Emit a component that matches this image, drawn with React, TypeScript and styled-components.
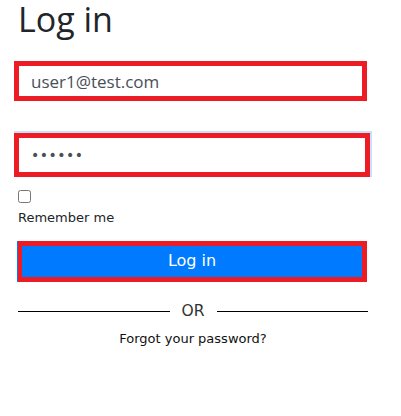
import styled, { createGlobalStyle } from "styled-components";

const GlobalStyle = createGlobalStyle`
  html, body {
    margin: 0;
    padding: 0;
    background: #ffffff;
  }
  body {
    font-family: "DejaVu Sans", Verdana, sans-serif;
    color: #212529;
  }
`;

const Page = styled.div`
  width: 350px;
  padding: 0 0 0 18px;
  display: flex;
  flex-direction: column;
`;

const Title = styled.h1`
  margin: 0;
  padding-top: 1px;
  font-family: "Open Sans", "Segoe UI", sans-serif;
  font-size: 34px;
  font-weight: 400;
  line-height: 36px;
  color: #212529;
`;

const Input = styled.input<{ $top: number; $width: number; $height: number; $glow?: boolean }>`
  box-sizing: border-box;
  display: block;
  margin: ${(p) => p.$top}px 0 0 -4px;
  width: ${(p) => p.$width}px;
  height: ${(p) => p.$height}px;
  padding: 0 12px;
  border: 5px solid #ed1c24;
  border-radius: 0;
  outline: none;
  background: #ffffff;
  font-family: "Open Sans", "Segoe UI", sans-serif;
  font-size: 17px;
  color: #495057;
  box-shadow: ${(p) => (p.$glow ? "1px -1px 0 1px rgba(128, 189, 255, 0.45)" : "none")};

  &[type="password"] {
    font-family: "DejaVu Sans", Verdana, sans-serif;
    font-size: 14px;
    letter-spacing: 0.5px;
  }
`;

const Check = styled.input`
  box-sizing: border-box;
  width: 13px;
  height: 13px;
  margin: 13px 0 0 0;
`;

const Label = styled.label`
  margin-top: 7px;
  font-size: 13px;
  line-height: 16px;
  color: #212529;
`;

const Button = styled.button`
  box-sizing: border-box;
  margin-top: 15px;
  width: 349px;
  height: 41px;
  border: 5px solid #ed1c24;
  border-left-width: 4px;
  background: #007bff;
  box-shadow: -1px 0 0 0 #007bff;
  color: #ffffff;
  font-family: "DejaVu Sans", Verdana, sans-serif;
  font-size: 16px;
  padding: 0 0 2px;
`;

const Divider = styled.div`
  display: flex;
  align-items: center;
  gap: 12px;
  margin-top: 19px;
  width: 350px;
  font-size: 15.5px;
  line-height: 20px;
  color: #333333;
  &::before,
  &::after {
    content: "";
    flex: 1;
    height: 1px;
    background: #000000;
  }
`;

const Forgot = styled.a`
  margin-top: 10px;
  width: 350px;
  text-align: center;
  font-size: 13px;
  line-height: 16px;
  color: #111111;
  text-decoration: none;
`;

export default function App() {
  return (
    <>
      <GlobalStyle />
      <Page>
        <Title>Log in</Title>
        <Input $top={24} $width={353} $height={40} defaultValue="user1@test.com" />
        <Input $top={32} $width={356} $height={44} $glow type="password" defaultValue="123456" />
        <Check type="checkbox" />
        <Label>Remember me</Label>
        <Button>Log in</Button>
        <Divider>OR</Divider>
        <Forgot href="#">Forgot your password?</Forgot>
      </Page>
    </>
  );
}
